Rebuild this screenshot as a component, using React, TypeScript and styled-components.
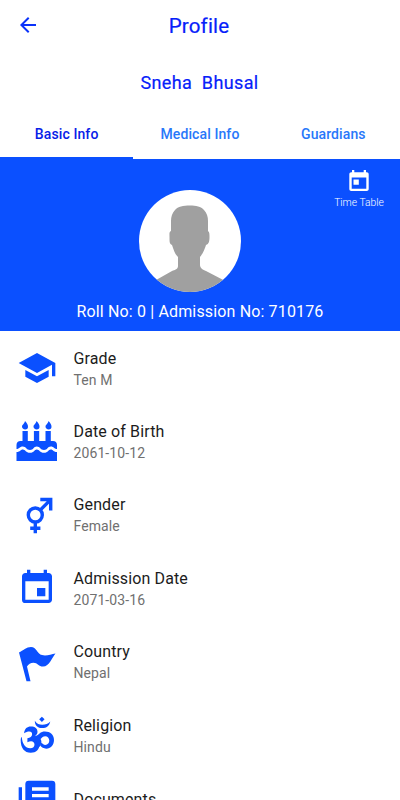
import React from 'react';
import styled, { createGlobalStyle } from 'styled-components';
import { MdArrowBack, MdEvent, MdSchool } from 'react-icons/md';

const blue = '#0b50ff';

const GlobalStyle = createGlobalStyle`
  * { box-sizing: border-box; }
  html, body { margin: 0; height: 800px; overflow: hidden; background: #fff; }
  body { font-family: Roboto, "Liberation Sans", sans-serif; }
  svg { display: block; overflow: visible; }
`;

const Screen = styled.main`
  width: 400px;
  height: 800px;
  overflow: hidden;
  background: #fff;
`;

const AppBar = styled.header`
  display: grid;
  grid-template-columns: 60px 1fr 60px;
  align-items: center;
  height: 50px;
  color: #0a32fa;
`;

const BackButton = styled.button`
  border: 0;
  padding: 0 0 0 16px;
  background: none;
  color: inherit;
`;

const Title = styled.h1`
  margin: 0;
  padding: 2px 2px 0 0;
  text-align: center;
  font-size: 20.5px;
  line-height: 24px;
  font-weight: 400;
  letter-spacing: 0.2px;
  -webkit-text-stroke: 0.2px;
  color: #0620fa;
`;

const StudentName = styled.h2`
  margin: 0;
  height: 59px;
  padding: 21px 1px 0 0;
  text-align: center;
  font-size: 18px;
  line-height: 24px;
  font-weight: 400;
  letter-spacing: 0.37px;
  -webkit-text-stroke: 0.2px;
  white-space: pre;
  color: #0620fa;
`;

const Tabs = styled.nav`
  display: grid;
  grid-template-columns: repeat(3, 1fr);
  height: 50px;
`;

const Tab = styled.button<{ $active?: boolean }>`
  border: 0;
  border-bottom: 2px solid ${(p) => (p.$active ? blue : '#fff')};
  padding: 2px 0 0;
  background: none;
  font: 500 14px/20px Roboto, "Liberation Sans", sans-serif;
  letter-spacing: 0.1px;
  color: ${(p) => (p.$active ? '#0720e8' : '#2878fa')};
`;

const Hero = styled.section`
  display: grid;
  grid-template-columns: 80px 1fr 80px;
  grid-template-rows: 133px 39px;
  height: 172px;
  background: ${blue};
  color: #fff;
`;

const AvatarSlot = styled.div`
  grid-column: 2;
  justify-self: center;
  padding: 31px 20px 0 0;
`;

const TimeTable = styled.button`
  display: flex;
  flex-direction: column;
  align-items: center;
  align-self: start;
  border: 0;
  padding: 10px 2px 0 0;
  background: none;
  color: #fff;
  font: 300 10.3px/16px Roboto, "Liberation Sans", sans-serif;
  gap: 2px;
`;

const RollLine = styled.p`
  grid-column: 1 / -1;
  margin: 0;
  padding-top: 10px;
  text-align: center;
  font-size: 16px;
  line-height: 20px;
  letter-spacing: 0.15px;
`;

const InfoList = styled.ul`
  margin: 0;
  padding: 0;
  list-style: none;
`;

const InfoRow = styled.li<{ $tall?: boolean }>`
  display: grid;
  grid-template-columns: 73.5px 1fr;
  align-items: ${(p) => (p.$tall ? 'start' : 'center')};
  height: ${(p) => (p.$tall ? 92 : 73.4)}px;
  padding-top: ${(p) => (p.$tall ? 8 : 0)}px;
`;

const IconSlot = styled.span`
  display: flex;
  align-items: center;
  justify-content: center;
  color: ${blue};
`;

const Texts = styled.div<{ $tall?: boolean }>`
  padding-top: ${(p) => (p.$tall ? 10 : 2)}px;
`;

const Label = styled.div`
  font-size: 16px;
  line-height: 22px;
  letter-spacing: 0.13px;
  color: #1c1c1c;
`;

const Value = styled.div`
  font-size: 14px;
  line-height: 20px;
  letter-spacing: 0.1px;
  color: #707070;
`;

const Avatar = () => (
  <svg width="102" height="102" viewBox="0 0 102 102">
    <defs>
      <clipPath id="face"><circle cx="51" cy="51" r="51" /></clipPath>
    </defs>
    <circle cx="51" cy="51" r="51" fill="#fff" />
    <path
      clipPath="url(#face)"
      fill="#a0a0a0"
      d="M51 15.500c-7 0-12 1-15 4.500-3 3-4 7-4 11v10c-2 1-1.500 3-1.500 6 0 5 0 7 2.500 8 2 6 3 9 6 12v9c0 3-3 4-6 5L10 94v12h82V94L67 81c-3-1-6-3-6-6v-8c3-4 4-6 6-12 3-1 3.500-4 3.500-8 0-3 0-5-1.500-6V31c0-4-1-8-4-11-3-3.500-8-4.500-14-4.500z"
    />
  </svg>
);

const TimeTableIcon = () => (
  <svg width="24" height="24" viewBox="0 0 24 24" fill="currentColor">
    <path
      fillRule="evenodd"
      d="M5 1h2.300v2.300h9.400V1H19v2.300h.7c1.200 0 2 .8 2 2V20c0 1.200-.8 2-2 2H4.300c-1.200 0-2-.8-2-2V5.300c0-1.200.8-2 2-2H5zM4.700 8.500v11.200h14.600V8.500zM6.500 10.500h5.300v5.300H6.500z"
    />
  </svg>
);

const CakeIcon = () => (
  <svg width="42" height="42" viewBox="0 0 42 42" fill="currentColor">
    <path d="M9 1c2 2 3 4 3 5.700C12 8.500 11 9.500 9.200 9.500S6 8.300 6 6.600C6 4.500 8.500 4 9 1zM20.500 1c2 2 3 4 3 5.700 0 1.800-1 2.800-2.800 2.800s-3.200-1.200-3.200-2.900C17.500 4.500 20 4 20.500 1zM32.500 1c2 2 3 4 3 5.700 0 1.800-1 2.800-2.800 2.800s-3.200-1.200-3.200-2.900c0-2.100 2.500-2.600 3-5.600z" />
    <path d="M6.500 11h5.300v10h6.100V11h5.300v10h6.300V11h5.300v10H37c2.500 0 4 1.600 4 4v4c-3 0-3-2.500-6.200-2.500S31.500 30 28 30s-4-3.500-7.200-3.500S17.500 30 14 30s-4-3.500-7.200-3.500S3.500 29 .5 29v-4c0-2.400 1.600-4 4-4h2z" />
    <path d="M.5 32c4 0 3.800-2.500 6.300-2.500 2.700 0 3 3.300 7.200 3.300s4.300-3.300 6.800-3.300c2.700 0 3 3.300 7.200 3.300s4.300-3.300 6.800-3.300S37 32 41 32v9H.5z" />
  </svg>
);

const GenderIcon = () => (
  <svg width="40" height="40" viewBox="0 0 40 40" fill="none" stroke="currentColor" strokeWidth="3.400">
    <circle cx="18.300" cy="21" r="7" />
    <path d="M23.200 16.100L33.200 6.100M23.300 5.500h10.400v10.900M18.300 27.800v11.400M13.200 34.300h10.200" />
  </svg>
);

const FlagIcon = () => (
  <svg width="40" height="40" viewBox="0 0 40 40" fill="currentColor">
    <path d="M2 11.400C6 9.500 9.500 5.900 14 5.900c5.500 0 6 6.800 11 8.200 4.500 1.200 9-.8 13.500-1.600C35 16.500 32.500 25.400 26 25.600c-4 .1-5.500-3.900-9.500-3.900-3 0-5 1.500-6.500 3.700l3.500 14.900H9.500z" />
  </svg>
);

const OmIcon = () => (
  <svg width="34" height="35" viewBox="60 38 101 104" fill="currentColor">
    <path d="M125 37l8 8-8 8-8-8zM104 49c6 9 13 12 22 12 10 0 18-4 24-10-3 13-11 20-24 20s-22-8-22-22z" />
    <path d="M72 86c2-14 9-20 20-20 13 0 20 6 20 16 0 6-3 10-8 13 6-1 9-3 14-8s10-6 16-6c16 0 27 10 27 25s-10 26-23 26c-8 0-14-3-18-9l4-9c3 4 7 7 11 7 8 0 12-6 12-13s-5-13-12-13-9 4-14 8c-2 2-4 3-6 4 2 3 3 7 3 11 0 16-10 26-26 26-19 0-30-14-30-38 0-4 1-7 3-9 2 22 11 34 25 34 9 0 13-4 13-11 0-6-4-10-10-10-4 0-7 1-11 3V101c8-1 14-5 14-12 0-5-3-8-8-8-6 0-10 2-16 5z" />
    <path d="M115 98c7 4 10 10 8 18-1 6-4 10-8 13-2-10-4-19-12-23z" />
  </svg>
);

const DocumentsIcon = () => (
  <svg width="40" height="40" viewBox="0 0 24 24" fill="currentColor">
    <path d="M3 5v16h16v2H3a2 2 0 0 1-2-2V5zM21 1H7a2 2 0 0 0-2 2v14a2 2 0 0 0 2 2h14a2 2 0 0 0 2-2V3a2 2 0 0 0-2-2zM9 5h10v2H9zm0 4h10v2H9zm0 4h6v2H9z" fillRule="evenodd" />
  </svg>
);

const rows = [
  { label: 'Grade', value: 'Ten M', icon: <MdSchool size={40} /> },
  { label: 'Date of Birth', value: '2061-10-12', icon: <CakeIcon /> },
  { label: 'Gender', value: 'Female', icon: <GenderIcon /> },
  { label: 'Admission Date', value: '2071-03-16', icon: <MdEvent size={40} /> },
  { label: 'Country', value: 'Nepal', icon: <FlagIcon /> },
  { label: 'Religion', value: 'Hindu', icon: <OmIcon /> },
  { label: 'Documents', value: '', icon: <DocumentsIcon />, tall: true },
];

export default function App() {
  return (
    <Screen>
      <GlobalStyle />
      <AppBar>
        <BackButton aria-label="Back"><MdArrowBack size={24} /></BackButton>
        <Title>Profile</Title>
      </AppBar>
      <StudentName>{'Sneha  Bhusal'}</StudentName>
      <Tabs>
        <Tab $active>Basic Info</Tab>
        <Tab>Medical Info</Tab>
        <Tab>Guardians</Tab>
      </Tabs>
      <Hero>
        <AvatarSlot><Avatar /></AvatarSlot>
        <TimeTable><TimeTableIcon />Time Table</TimeTable>
        <RollLine>Roll No: 0 | Admission No: 710176</RollLine>
      </Hero>
      <InfoList>
        {rows.map((row) => (
          <InfoRow key={row.label} $tall={row.tall}>
            <IconSlot>{row.icon}</IconSlot>
            <Texts $tall={row.tall}>
              <Label>{row.label}</Label>
              {row.value && <Value>{row.value}</Value>}
            </Texts>
          </InfoRow>
        ))}
      </InfoList>
    </Screen>
  );
}
